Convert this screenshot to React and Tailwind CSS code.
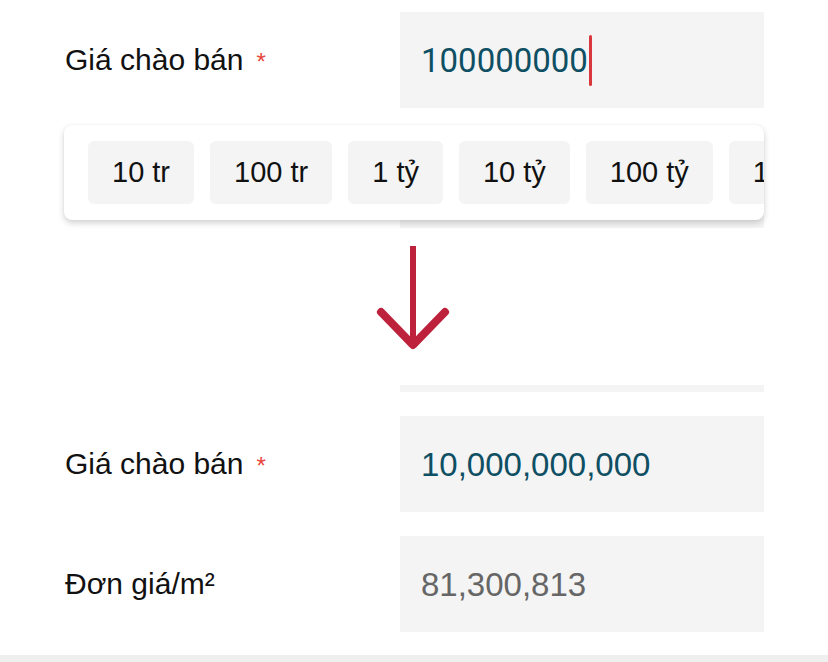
import React from "react";

const LABEL = "font-[family-name:'Liberation_Sans',Arial,sans-serif]";
const ROBOTO = "font-[family-name:Roboto,sans-serif]";

function Label({ children, required }) {
  return (
    <div className={`w-[400px] pl-[65px] flex items-center text-[30px] text-[#111] ${LABEL}`}>
      <span className="leading-none">{children}</span>
      {required && (
        <span className="ml-[13px] text-[24px] leading-none text-[#e8453c] translate-y-[2px]">*</span>
      )}
    </div>
  );
}

function Field({ children, className = "" }) {
  return (
    <div className={`w-[364px] h-[96px] bg-[#f4f4f4] flex items-center pl-[21px] ${className}`}>
      {children}
    </div>
  );
}

const chips = ["10 tr", "100 tr", "1 tỷ", "10 tỷ", "100 tỷ", "1000 tỷ"];

export default function App() {
  return (
    <div className="w-[828px] h-[662px] bg-white overflow-hidden flex flex-col">
      {/* Before */}
      <div className="relative pt-[12px]">
        <div className="flex">
          <Label required>Giá chào bán</Label>
          <Field>
            <span className={`${ROBOTO} text-[33px] text-[#0f4f63] leading-none`}>100000000</span>
            <span className="ml-[1px] w-[3px] h-[51px] rounded-full bg-[#d9363e]" />
          </Field>
        </div>
        <div className="flex mt-[24px]">
          <div className="w-[400px]" />
          <Field />
        </div>
        <div className="absolute left-[64px] top-[125px] w-[700px] h-[95px] bg-white rounded-[8px] shadow-[0_3px_6px_rgba(0,0,0,0.18),0_0_2px_rgba(0,0,0,0.06)] overflow-hidden">
          <div className="flex gap-[16px] pl-[24px] pt-[16px]">
            {chips.map((c) => (
              <div
                key={c}
                className={`shrink-0 h-[63px] px-[24px] rounded-[6px] bg-[#f4f4f4] flex items-center text-[29px] text-[#111] ${LABEL}`}
              >
                {c}
              </div>
            ))}
          </div>
        </div>
      </div>

      {/* Arrow */}
      <div className="h-[157px] flex justify-center pt-[12px]">
        <svg width="80" height="110" viewBox="0 0 80 110" className="ml-[-2px]">
          <line x1="40" y1="6" x2="40" y2="100" stroke="#be213b" strokeWidth="6" />
          <polyline
            points="8,72 40,105 72,72"
            fill="none"
            stroke="#be213b"
            strokeWidth="8"
            strokeLinecap="round"
            strokeLinejoin="round"
          />
        </svg>
      </div>

      {/* After */}
      <div className="flex">
        <div className="w-[400px]" />
        <div className="w-[364px] h-[7px] bg-[#f4f4f4]" />
      </div>
      <div className="flex mt-[24px]">
        <Label required>Giá chào bán</Label>
        <Field>
          <span className={`${LABEL} text-[33px] text-[#0f4f63] leading-none`}>10,000,000,000</span>
        </Field>
      </div>
      <div className="flex mt-[24px]">
        <Label>Đơn giá/m²</Label>
        <Field>
          <span className={`${LABEL} text-[33px] text-[#666] leading-none`}>81,300,813</span>
        </Field>
      </div>
      <div className="mt-[23px] h-[7px] bg-[#efefef]" />
    </div>
  );
}
